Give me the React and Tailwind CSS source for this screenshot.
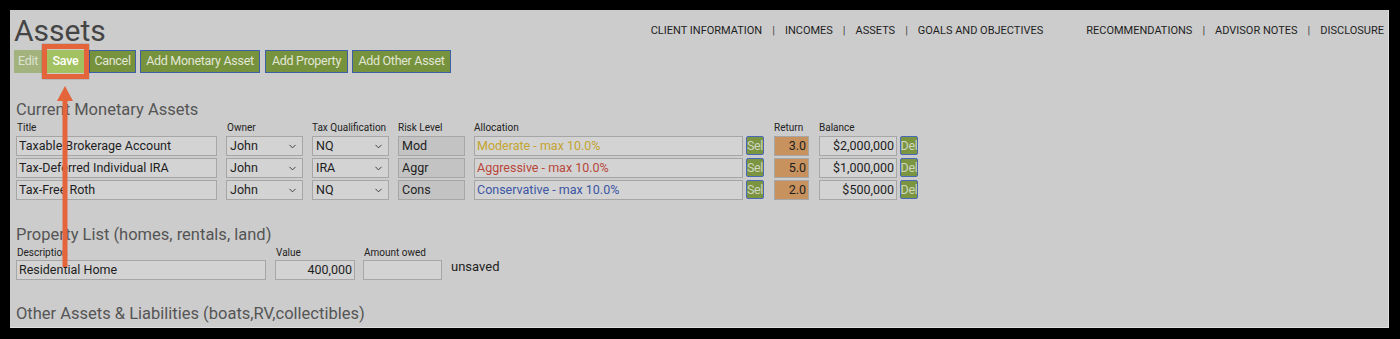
import React from "react";
import { ChevronDown } from "lucide-react";

function Field({ className = "", children }) {
  return (
    <div
      className={
        "h-[20px] border border-[#a6a6a6] text-[12.5px] leading-[18px] text-[#1e1e1e] whitespace-nowrap overflow-hidden " +
        className
      }
    >
      {children}
    </div>
  );
}

function Select({ value, className = "" }) {
  return (
    <div
      className={
        "h-[20px] border border-[#a6a6a6] bg-[#d3d3d3] flex items-center justify-between pl-[3px] pr-[4px] text-[12.5px] text-[#1e1e1e] " +
        className
      }
    >
      <span>{value}</span>
      <ChevronDown size={11} strokeWidth={2} className="text-[#333]" />
    </div>
  );
}

function SmallBtn({ label, className = "" }) {
  return (
    <div
      className={
        "h-[19px] w-[18px] rounded-[2px] border border-[#4a68b8] bg-[#7a9440] text-[12.5px] leading-[17px] text-[#cfd6bf] overflow-hidden flex justify-center tracking-[-0.3px] " +
        className
      }
    >
      {label}
    </div>
  );
}

const rows = [
  {
    title: "Taxable Brokerage Account",
    owner: "John",
    tax: "NQ",
    risk: "Mod",
    alloc: "Moderate - max 10.0%",
    allocColor: "text-[#c4a430]",
    ret: "3.0",
    bal: "$2,000,000",
  },
  {
    title: "Tax-Deferred Individual IRA",
    owner: "John",
    tax: "IRA",
    risk: "Aggr",
    alloc: "Aggressive - max 10.0%",
    allocColor: "text-[#b8473a]",
    ret: "5.0",
    bal: "$1,000,000",
  },
  {
    title: "Tax-Free Roth",
    owner: "John",
    tax: "NQ",
    risk: "Cons",
    alloc: "Conservative - max 10.0%",
    allocColor: "text-[#3c55a4]",
    ret: "2.0",
    bal: "$500,000",
  },
];

function Sep() {
  return <span className="mx-[10px] text-[#444]">|</span>;
}

const btn =
  "h-[23px] bg-[#76923c] border border-[#3d5fa8] text-[#e2e6d8] flex items-center justify-center whitespace-nowrap";

export default function App() {
  return (
    <div className="w-[1400px] h-[339px] bg-black pt-[10px] pl-[10px] font-['Roboto',sans-serif]">
      <div className="relative w-[1379px] h-[318px] bg-[#cccccc] border-r border-b border-[#e0e0e0] px-[4px] pt-[6px]">
        {/* header */}
        <div className="flex justify-between items-start">
          <h1 className="text-[30px] leading-[30px] text-[#454545]">Assets</h1>
          <nav className="mt-[9px] flex items-center text-[11px] leading-[11px] text-[#1e1e1e] whitespace-nowrap">
            <span>CLIENT INFORMATION</span>
            <Sep />
            <span>INCOMES</span>
            <Sep />
            <span>ASSETS</span>
            <Sep />
            <span>GOALS AND OBJECTIVES</span>
            <span className="ml-[43px]">RECOMMENDATIONS</span>
            <Sep />
            <span>ADVISOR NOTES</span>
            <Sep />
            <span>DISCLOSURE</span>
          </nav>
        </div>

        {/* buttons */}
        <div className="mt-[4px] flex gap-[4px] h-[23px] text-[12.5px] tracking-[-0.3px]">
          <div className="w-[28px] h-[23px] bg-[#a3b37e] text-[#dde2d0] flex items-center justify-center">Edit</div>
          <div className="w-[39px] h-[23px] bg-[#a2c160] text-white font-medium flex items-center justify-center">Save</div>
          <div className={"w-[47px] " + btn}>Cancel</div>
          <div className={"w-[120px] " + btn}>Add Monetary Asset</div>
          <div className={"w-[83px] ml-[1px] " + btn}>Add Property</div>
          <div className={"w-[99px] " + btn}>Add Other Asset</div>
        </div>

        {/* Current Monetary Assets */}
        <div className="ml-[2px]">
          <h2 className="mt-[28px] text-[16.5px] leading-[17px] text-[#555]">Current Monetary Assets</h2>
          <div className="mt-[5px] flex text-[10px] leading-[10px] text-[#222] whitespace-nowrap">
            <div className="w-[201px] pl-[1px]">Title</div>
            <div className="ml-[9px] w-[77px] pl-[1px]">Owner</div>
            <div className="ml-[9px] w-[77px]">Tax Qualification</div>
            <div className="ml-[9px] w-[67px]">Risk Level</div>
            <div className="ml-[9px] w-[269px]">Allocation</div>
            <div className="ml-[3px] w-[18px]"></div>
            <div className="ml-[10px] w-[35px]">Return</div>
            <div className="ml-[10px] w-[78px]">Balance</div>
          </div>
          <div className="mt-[3px] flex flex-col gap-[2px]">
            {rows.map((r) => (
              <div key={r.title} className="flex items-start h-[20px]">
                <Field className="w-[201px] bg-[#d3d3d3] pl-[2px]">{r.title}</Field>
                <Select value={r.owner} className="ml-[9px] w-[77px]" />
                <Select value={r.tax} className="ml-[9px] w-[77px]" />
                <Field className="ml-[9px] w-[67px] bg-[#c3c3c3] pl-[3px]">{r.risk}</Field>
                <Field className={"ml-[9px] w-[269px] bg-[#d3d3d3] pl-[2px] " + r.allocColor}>{r.alloc}</Field>
                <SmallBtn label="Sel" className="ml-[3px]" />
                <Field className="ml-[10px] w-[35px] bg-[#c8925f] text-right pr-[2px]">{r.ret}</Field>
                <Field className="ml-[10px] w-[78px] bg-[#d3d3d3] text-right pr-[2px]">{r.bal}</Field>
                <SmallBtn label="Del" className="ml-[3px]" />
              </div>
            ))}
          </div>

          {/* Property List */}
          <h2 className="mt-[26px] text-[16.5px] leading-[17px] text-[#555]">Property List (homes, rentals, land)</h2>
          <div className="mt-[5px] flex text-[10px] leading-[10px] text-[#222] whitespace-nowrap">
            <div className="w-[250px] pl-[1px]">Description</div>
            <div className="ml-[9px] w-[80px] pl-[1px]">Value</div>
            <div className="ml-[8px] w-[79px] pl-[1px]">Amount owed</div>
          </div>
          <div className="mt-[2px] flex items-start h-[20px]">
            <Field className="w-[250px] bg-[#d3d3d3] pl-[2px]">Residential Home</Field>
            <Field className="ml-[9px] w-[80px] bg-[#d3d3d3] text-right pr-[2px]">400,000</Field>
            <Field className="ml-[8px] w-[79px] bg-[#d3d3d3]"></Field>
            <span className="ml-[9px] text-[13px] leading-[14px] text-[#222]">unsaved</span>
          </div>

          {/* Other Assets */}
          <h2 className="mt-[25px] text-[16.5px] leading-[17px] text-[#555]">Other Assets &amp; Liabilities (boats,RV,collectibles)</h2>
        </div>

        {/* annotation: highlight box */}
        <div className="absolute left-[32px] top-[34px] w-[47px] h-[35px] border-[5px] border-[#e4643c] shadow-[0_0_1px_rgba(0,0,0,0.6)]"></div>
        {/* annotation: arrow */}
        <svg
          className="absolute left-[45px] top-[76px]"
          width="20"
          height="182"
          viewBox="0 0 20 182"
        >
          <polygon points="10,0 2,15 18,15" fill="#e4643c" />
          <rect x="7.5" y="14" width="5" height="167" fill="#e4643c" />
        </svg>
      </div>
    </div>
  );
}
